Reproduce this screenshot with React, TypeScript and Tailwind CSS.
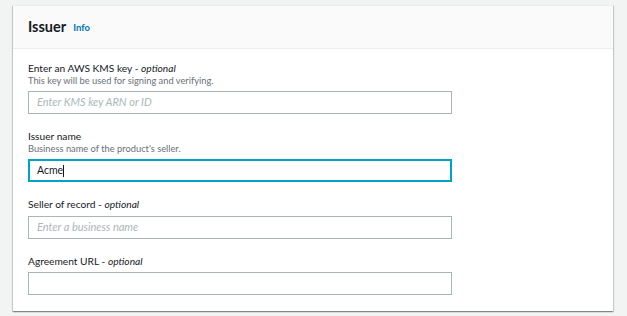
import React from "react";

const font = { fontFamily: "Lato, 'Noto Sans', sans-serif" };

function Field({
  label,
  optional,
  desc,
  children,
}: {
  label: string;
  optional?: boolean;
  desc?: string;
  children: React.ReactNode;
}) {
  return (
    <div className="flex flex-col">
      <div className="text-[10.2px] leading-[14px] text-[#16191f]">
        {label}
        {optional && (
          <>
            {" - "}
            <i>optional</i>
          </>
        )}
      </div>
      {desc && <div className="text-[9.3px] leading-[12px] text-[#687078]">{desc}</div>}
      <div className={desc ? "mt-[4px]" : "mt-[4.5px]"}>{children}</div>
    </div>
  );
}

export default function App() {
  return (
    <div className="w-[627px] h-[316px] bg-[#f2f3f3] pt-[5px] pl-[13px] pr-[14px]" style={font}>
      <div className="bg-white border-t border-[#eaeded] shadow-[0_1px_1px_0_rgba(0,28,36,0.3),1px_1px_1px_0_rgba(0,28,36,0.15),-1px_1px_1px_0_rgba(0,28,36,0.15)]">
        <div className="h-[43px] bg-[#fafafa] border-b border-[#eaeded] flex items-center px-[15px]">
          <span className="text-[14.5px] font-bold text-[#16191f] leading-none">Issuer</span>
          <span className="ml-[7px] text-[9.5px] font-bold text-[#0073bb] leading-none mt-[2px]">Info</span>
        </div>
        <div className="px-[15px] pt-[12px] pb-[16px] flex flex-col gap-[15px]">
          <Field label="Enter an AWS KMS key" optional desc="This key will be used for signing and verifying.">
            <div className="w-[424px] h-[23px] border border-[#aab7b8] flex items-center px-[8px]">
              <span className="text-[11px] italic text-[#aab7b8]">Enter KMS key ARN or ID</span>
            </div>
          </Field>
          <Field label="Issuer name" desc="Business name of the product's seller.">
            <div className="w-[424px] h-[23px] border-2 border-[#00a1c9] flex items-center px-[7px]">
              <span className="text-[10.5px] text-[#16191f]">Acme</span>
              <span className="w-px h-[12px] bg-[#16191f]" />
            </div>
          </Field>
          <Field label="Seller of record" optional>
            <div className="w-[424px] h-[23px] border border-[#aab7b8] flex items-center px-[8px]">
              <span className="text-[11px] italic text-[#aab7b8]">Enter a business name</span>
            </div>
          </Field>
          <Field label="Agreement URL" optional>
            <div className="w-[424px] h-[23px] border border-[#aab7b8]" />
          </Field>
        </div>
      </div>
    </div>
  );
}
